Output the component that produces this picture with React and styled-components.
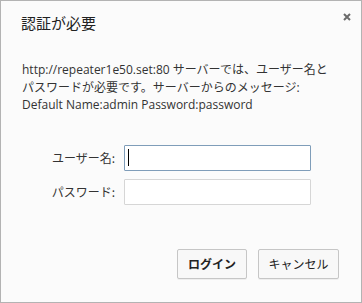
import React from "react";
import styled, { createGlobalStyle } from "styled-components";

const GlobalStyle = createGlobalStyle`
  html, body {
    margin: 0;
    padding: 0;
    background: #ffffff;
  }
  * {
    box-sizing: border-box;
  }
`;

const FONT = `"Open Sans", "Noto Sans CJK JP", sans-serif`;
const JP_FONT = `"Noto Sans CJK JP", "Noto Sans", sans-serif`;

export default function App() {
  return (
    <>
      <GlobalStyle />
      <Dialog>
        <Header>
          <Title>認証が必要</Title>
          <CloseButton aria-label="close">
            <svg width="8" height="8" viewBox="0 0 8 8">
              <path d="M1 1L7 7M7 1L1 7" stroke="#6b6b6b" strokeWidth="2" />
            </svg>
          </CloseButton>
        </Header>
        <Message>
          http://repeater1e50.set:80 サーバーでは、ユーザー名と
          <br />
          パスワードが必要です。サーバーからのメッセージ:
          <br />
          Default Name:admin Password:password
        </Message>
        <Form>
          <Row>
            <Label>ユーザー名:</Label>
            <InputWrap>
              <Input type="text" $focused />
              <Caret />
            </InputWrap>
          </Row>
          <Row>
            <Label>パスワード:</Label>
            <InputWrap>
              <Input type="password" />
            </InputWrap>
          </Row>
        </Form>
        <Footer>
          <Button $primary $width={70}>ログイン</Button>
          <Button $width={81}>キャンセル</Button>
        </Footer>
      </Dialog>
    </>
  );
}

const Dialog = styled.div`
  width: 362px;
  height: 303px;
  display: flex;
  flex-direction: column;
  border: 1px solid #b3b3b3;
  background: #fbfbfb;
  font-family: ${FONT};
  color: #333333;
`;

const Header = styled.div`
  display: flex;
  align-items: flex-start;
  justify-content: space-between;
  padding: 11px 10px 0 20px;
`;

const Title = styled.h1`
  margin: 0;
  font-family: ${JP_FONT};
  font-size: 15px;
  line-height: 22px;
  font-weight: normal;
  color: #222222;
`;

const CloseButton = styled.button`
  display: flex;
  align-items: center;
  justify-content: center;
  width: 8px;
  height: 8px;
  margin-top: 1px;
  padding: 0;
  border: 0;
  background: transparent;
`;

const Message = styled.p`
  margin: 27px 0 0 21px;
  font-size: 12px;
  line-height: 17.5px;
  color: #333333;
  white-space: nowrap;
`;

const Form = styled.div`
  display: flex;
  flex-direction: column;
  gap: 8px;
  margin-top: 31px;
`;

const Row = styled.div`
  display: flex;
  align-items: center;
  gap: 9px;
`;

const Label = styled.label`
  width: 114px;
  text-align: right;
  font-family: ${JP_FONT};
  font-size: 12px;
  color: #333333;
`;

const InputWrap = styled.div`
  position: relative;
  width: 187px;
  height: 26px;
`;

const Input = styled.input`
  width: 100%;
  height: 100%;
  margin: 0;
  padding: 0 4px;
  border: 1px solid ${p => (p.$focused ? "#7f9db9" : "#d6d6d6")};
  border-radius: 1px;
  background: #ffffff;
  outline: none;
  font-family: ${FONT};
  font-size: 12px;
`;

const Caret = styled.span`
  position: absolute;
  left: 4px;
  top: 4px;
  width: 1px;
  height: 17px;
  background: #000000;
`;

const Footer = styled.div`
  display: flex;
  justify-content: flex-end;
  gap: 11px;
  margin-top: 44px;
  padding-right: 22px;
`;

const Button = styled.button`
  width: ${p => p.$width}px;
  height: 30px;
  padding: 0;
  border: 1px solid #c6c6c6;
  border-radius: 2px;
  background: #f8f8f8;
  font-family: ${JP_FONT};
  font-size: 12px;
  font-weight: ${p => (p.$primary ? "bold" : "normal")};
  color: #222222;
  box-shadow: 0 1px 0 rgba(0, 0, 0, 0.05);
`;
